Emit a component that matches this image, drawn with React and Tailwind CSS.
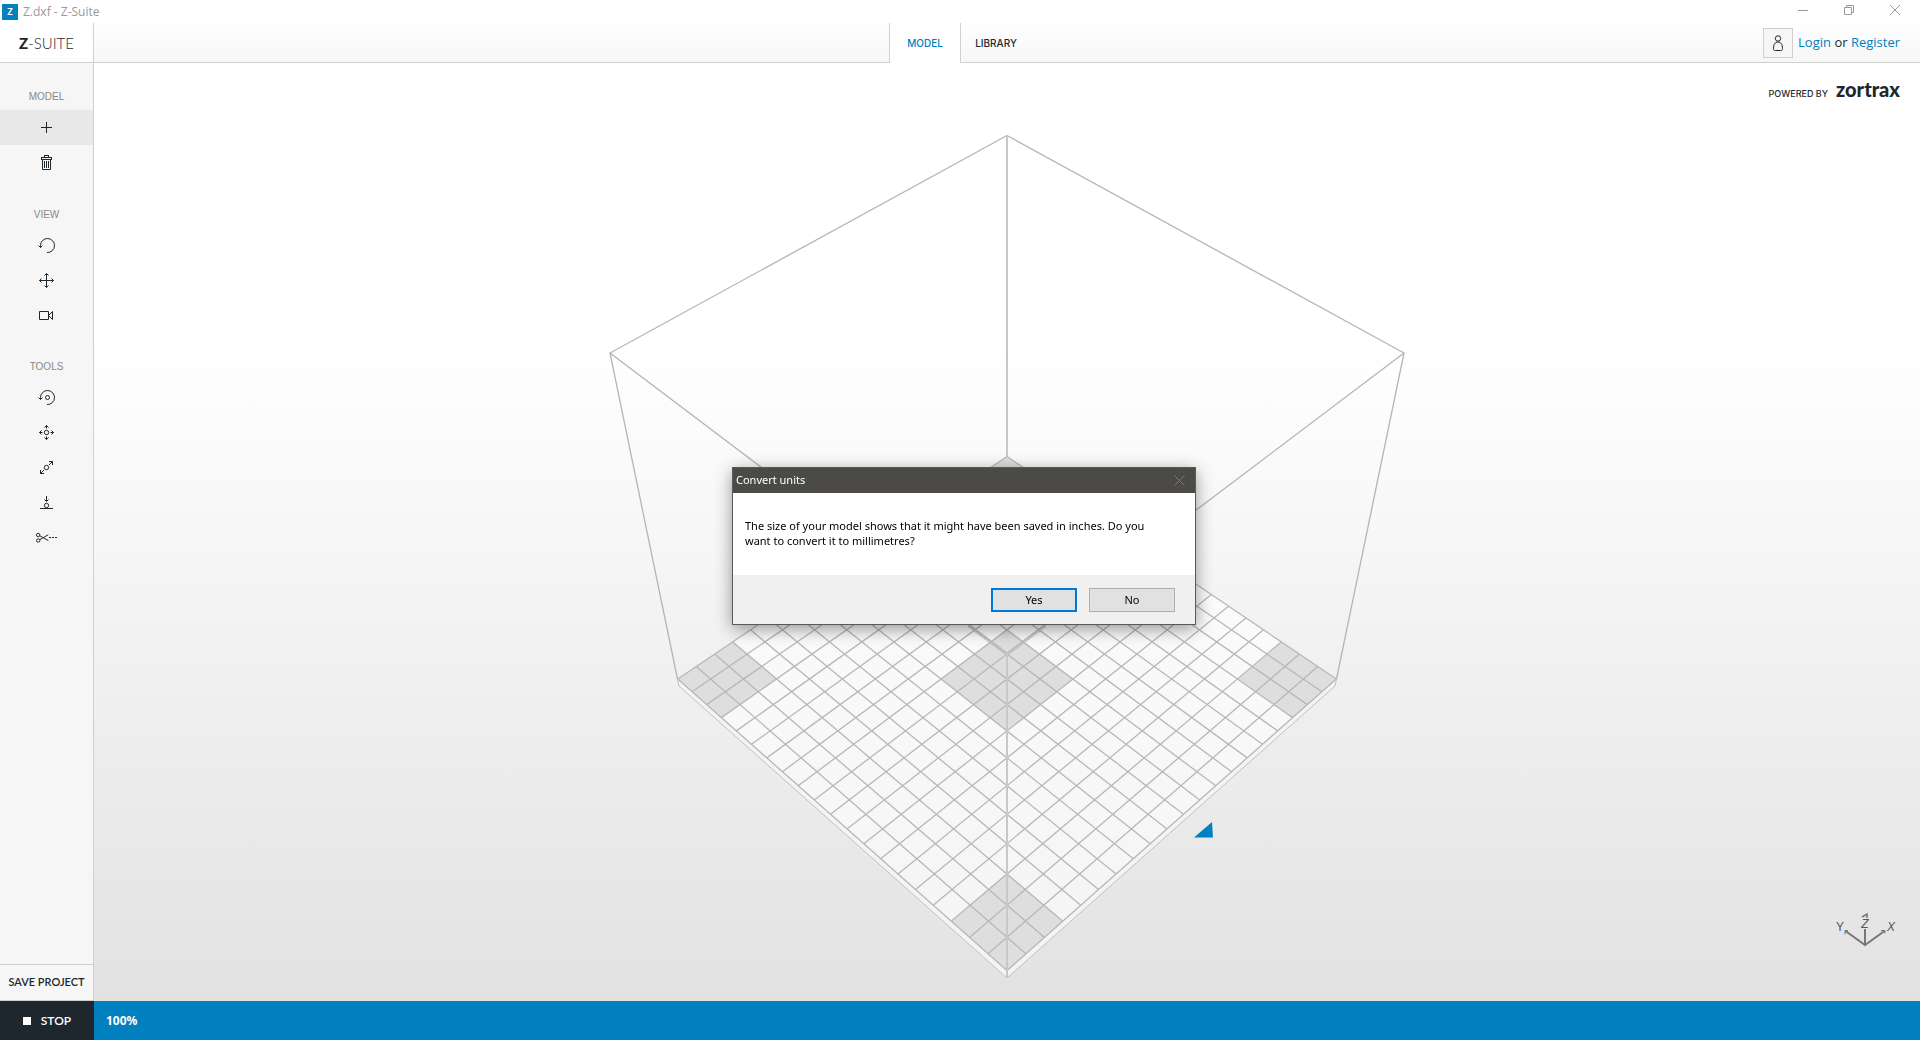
import React, { useState } from 'react';

const GRID_CELLS = 20;

const iconPaths = {
  add: <path d="M10.5 5v11M5 10.5h11" />,
  delete: (
    <>
      <rect x="8.5" y="3.5" width="4" height="2" />
      <rect x="5.5" y="5.5" width="10" height="2" />
      <path d="M6.5 7.5v10h8v-10M8.5 9v7M10.5 9v7M12.5 9v7" />
    </>
  ),
  rotateView: <path d="M4.5 12.5v-2a7 7 0 1 1 6.5 7M2.5 10.5l2 2 2-2" />,
  moveView: <path d="M10.5 3.5v14M3.5 10.5h14M8.5 5.5l2-2 2 2M8.5 15.5l2 2 2-2M5.5 8.5l-2 2 2 2M15.5 8.5l2 2-2 2" />,
  camera: <path d="M3.5 6.5h9v8h-9zM12.5 10.5l4-4v8z" />,
  rotate: (
    <>
      <path d="M4.5 12.5v-2a7 7 0 1 1 6.5 7M2.5 10.5l2 2 2-2" />
      <circle cx="11.5" cy="10.5" r="2" />
    </>
  ),
  move: (
    <>
      <circle cx="10.5" cy="10.5" r="2.2" />
      <path d="M10.5 3.5v3M10.5 14.5v3M3.5 10.5h3M14.5 10.5h3M8.5 5.5l2-2 2 2M8.5 15.5l2 2 2-2M5.5 8.5l-2 2 2 2M15.5 8.5l2 2-2 2" />
    </>
  ),
  scale: (
    <>
      <circle cx="10.5" cy="10.5" r="2.2" />
      <path d="M13 8l3.5-3.5M8 13l-3.5 3.5M13 4.5h3.5v3.5M4.5 13v3.5h3.5" />
    </>
  ),
  drop: (
    <>
      <circle cx="10.5" cy="13.5" r="2.2" />
      <path d="M10.5 4v5.5M8.5 7.5l2 2 2-2M4 16.5h13" />
    </>
  ),
  cut: (
    <>
      <circle cx="2.2" cy="8" r="1.7" />
      <circle cx="2.2" cy="13.5" r="1.7" />
      <path d="M3.8 8.8l8.5 4.7M3.8 12.7l8.5-5M13 10.5h2M16 10.5h2M19 10.5h2" />
    </>
  ),
};

const sections = [
  { title: 'MODEL', items: [{ id: 'add', label: 'Add model' }, { id: 'delete', label: 'Delete model' }] },
  {
    title: 'VIEW',
    items: [
      { id: 'rotateView', label: 'Rotate view' },
      { id: 'moveView', label: 'Move view' },
      { id: 'camera', label: 'Camera' },
    ],
  },
  {
    title: 'TOOLS',
    items: [
      { id: 'rotate', label: 'Rotate' },
      { id: 'move', label: 'Move' },
      { id: 'scale', label: 'Scale' },
      { id: 'drop', label: 'Place on platform' },
      { id: 'cut', label: 'Split' },
    ],
  },
];

// Perspective projection of a platform cell (u, v) to scene coordinates
const project = (u, v) => {
  const s = (u + v) / GRID_CELLS;
  const d = (u - v) / GRID_CELLS;
  const w = 1 - 0.1184 * s;
  return [1007 + (329.25 * d * 0.8816) / w, (456.5 + 142.1 * s) / w];
};

const quad = (u, v, size) =>
  [project(u, v), project(u + size, v), project(u + size, v + size), project(u, v + size)]
    .map((p) => p.map((n) => n.toFixed(1)).join(','))
    .join(' ');

const segment = (a, b) => `M${a.map((n) => n.toFixed(1)).join(' ')}L${b.map((n) => n.toFixed(1)).join(' ')}`;

const gridPath = Array.from({ length: GRID_CELLS + 1 }, (_, i) =>
  segment(project(i, 0), project(i, GRID_CELLS)) + segment(project(0, i), project(GRID_CELLS, i))
).join('');

const darkAreas = [[0, 0, 3], [17, 0, 3], [0, 17, 3], [17, 17, 3], [8, 8, 4]];

const Scene = () => (
  <svg viewBox="94 63 1826 938" className="absolute inset-0 w-full h-full" fill="none" aria-label="Build platform">
    <path d="M677.5 679L679 686L1007 978L1335 686L1336.5 679L1007 970z" fill="#f4f4f4" />
    <polygon points={quad(0, 0, 20)} fill="#fff" fillOpacity="0.6" />
    {darkAreas.map(([u, v, size]) => (
      <polygon key={`${u}-${v}`} points={quad(u, v, size)} fill="#dedede" />
    ))}
    <path d={gridPath} stroke="#b7b7b7" strokeWidth="1.3" />
    <path d="M677.5 679L679 686L1007 978L1335 686L1336.5 679" stroke="#c0c0c0" />
    <g stroke="#b5b5b5" strokeWidth="1.3">
      <path d="M1007 135.5L610 353L677.5 679M1007 135.5L1404 353L1336.5 679" />
      <path d="M610 353L968 623.5M1404 353L1046 623.5" />
    </g>
    <path d="M968 623.5L1007 652.5L1046 623.5M968 626.5L1007 655.5L1046 626.5" stroke="#bcbcbc" />
    <path d="M1007 135.5V457M1007 653V978" stroke="#c8c8c8" strokeWidth="2" />
    <path d="M1194 837.5L1212 822L1213 837.5z" fill="#0080be" />
    <g stroke="#777" strokeWidth="2">
      <path d="M1845.5 931L1865 945L1884.5 931M1865 945V929" />
      <path d="M1845 934.5v-4h3M1881 930.5h4v3" strokeWidth="1" />
      <path d="M1862 917l5-3v4" strokeWidth="1.5" />
    </g>
    <g fill="#555" fontFamily="Liberation Sans" fontSize="12" textAnchor="middle">
      <text x="1840" y="931">Y</text>
      <text x="1865" y="928" fontStyle="italic">Z</text>
      <text x="1891" y="931" fontStyle="italic">X</text>
    </g>
  </svg>
);

const TitleBar = () => (
  <div className="flex items-center justify-between h-[23px] pl-0.5 pr-5 bg-white">
    <div className="flex items-center gap-[5px]">
      <span className="flex items-center justify-center w-4 h-4 bg-[#0080be] text-white text-[9px] leading-none font-bold">Z</span>
      <span className="text-xs leading-4 text-[#999] font-['Open_Sans',sans-serif]">Z.dxf - Z-Suite</span>
    </div>
    <div className="flex items-center gap-9 pb-[3px]">
      <button aria-label="Minimize">
        <svg width="10" height="10" stroke="#999" fill="none" className="block"><path d="M0 5.5h10" /></svg>
      </button>
      <button aria-label="Restore">
        <svg width="10" height="10" stroke="#999" fill="none" className="block"><path d="M.5 2.5h7v7h-7zM2.5 2.5v-2h7v7h-2" /></svg>
      </button>
      <button aria-label="Close">
        <svg width="10" height="10" stroke="#999" fill="none" className="block"><path d="M0 0l10 10M10 0L0 10" /></svg>
      </button>
    </div>
  </div>
);

const Header = ({ tab, setTab }) => (
  <header className="grid grid-cols-[1fr_auto_1fr] h-10 bg-linear-to-b from-white to-[#f6f6f6]">
    <div className="flex border-b border-[#d0d0d0]">
      <div className="flex items-center justify-center w-[94px] bg-white border-r border-[#d0d0d0] text-[15px] leading-5 text-[#1e272e]">
        <span><b className="font-black">Z</b><span className="font-light">-SUITE</span></span>
      </div>
    </div>
    <nav className="flex text-[10px] font-medium font-['Inter',sans-serif]">
      {['MODEL', 'LIBRARY'].map((name) => (
        <button
          key={name}
          onClick={() => setTab(name)}
          className={tab === name
            ? 'w-[72px] border-x border-[#d0d0d0] bg-white text-[#0080be]'
            : 'w-[70px] pt-px border-b border-[#d0d0d0] text-[#1e272e]'}
        >
          {name}
        </button>
      ))}
    </nav>
    <div className="flex items-center justify-end gap-[5px] pr-5 border-b border-[#d0d0d0]">
      <span className="flex items-center justify-center w-[30px] h-[30px] border border-[#d0d0d0] bg-[#f6f6f6]">
        <svg width="12" height="16" fill="none" stroke="#1e272e" className="block">
          <circle cx="6" cy="3.5" r="2.7" />
          <path d="M3.5 15.5h5c1.5 0 2-.5 2-2 0-4-1.5-6.5-4.5-6.5s-4.5 2.5-4.5 6.5c0 1.5.5 2 2 2z" />
        </svg>
      </span>
      <span className="pt-px text-[13px] text-[#1e272e] font-['Open_Sans',sans-serif]">
        <a href="#login" className="text-[#0080be]">Login</a> or <a href="#register" className="text-[#0080be]">Register</a>
      </span>
    </div>
  </header>
);

const Sidebar = () => (
  <aside className="flex flex-col w-[94px] shrink-0 bg-[#f6f6f6] border-r border-[#d0d0d0]">
    <div className="flex-1">
      {sections.map((section) => (
        <section key={section.title} className="flex flex-col first:pb-px">
          <h2 className="flex items-end justify-center h-[47px] pb-1.5 text-[10px] leading-[14px] text-[#888] font-['Liberation_Sans',sans-serif]">
            {section.title}
          </h2>
          {section.items.map((item) => (
            <button
              key={item.id}
              aria-label={item.label}
              className={`flex items-center justify-center h-[35px] ${item.id === 'add' ? 'bg-[#e8e8e8]' : ''}`}
            >
              <svg width="21" height="21" viewBox="0 0 21 21" fill="none" stroke="#1e272e">{iconPaths[item.id]}</svg>
            </button>
          ))}
        </section>
      ))}
    </div>
    <button className="h-[37px] border-y border-[#d0d0d0] text-[11px] text-[#1e272e] font-semibold whitespace-nowrap">SAVE PROJECT</button>
  </aside>
);

const ConvertDialog = ({ onClose }) => (
  <div className="fixed inset-0 flex items-center justify-center pl-2 pt-[52px]">
    <div
      role="dialog"
      aria-labelledby="dialog-title"
      className="w-[464px] border border-[#5a5957] bg-white text-[11px] text-black font-['Noto_Sans',sans-serif] shadow-[0_4px_16px_rgba(0,0,0,0.4)]"
    >
      <div className="flex items-center justify-between h-[25px] pl-[3px] pr-2.5 pb-px bg-[#4b4a47] text-white">
        <h2 id="dialog-title" className="leading-4">Convert units</h2>
        <button aria-label="Close dialog" onClick={onClose}>
          <svg width="11" height="11" stroke="#7d7c7a" fill="none" className="block"><path d="M.5 .5l10 10M10.5 .5l-10 10" /></svg>
        </button>
      </div>
      <p className="h-[82px] px-3 pt-[25px] leading-[15px]">
        The size of your model shows that it might have been saved in inches. Do you
        <br />
        want to convert it to millimetres?
      </p>
      <div className="flex items-center justify-end gap-3 h-[49px] pr-5 bg-[#f0f0f0]">
        <button onClick={onClose} className="w-[86px] h-6 border-2 border-[#0078d7] bg-[#e1e1e1] leading-4">Yes</button>
        <button onClick={onClose} className="w-[86px] h-6 border border-[#adadad] bg-[#e1e1e1] leading-4">No</button>
      </div>
    </div>
  </div>
);

const App = () => {
  const [tab, setTab] = useState('MODEL');
  const [dialogOpen, setDialogOpen] = useState(true);

  return (
    <div className="flex flex-col h-screen font-['Lato',sans-serif]">
      <TitleBar />
      <Header tab={tab} setTab={setTab} />

      <div className="flex flex-1 min-h-0">
        <Sidebar />
        <main className="relative flex-1 bg-linear-to-b from-white from-30% to-[#e2e2e2]">
          <Scene />
          <div className="relative flex items-baseline justify-end gap-2 pt-3.5 pr-5 text-[#1e272e]">
            <span className="text-[9px] font-medium font-['Inter',sans-serif]">POWERED BY</span>
            <span className="text-xl leading-6 font-black">zortrax</span>
          </div>
        </main>
      </div>

      {/* Progress */}
      <footer className="flex h-[39px] shrink-0 bg-[#0080be] text-white">
        <button className="flex items-center justify-center gap-2.5 w-[94px] bg-[#1e272e] text-xs font-semibold">
          <span className="w-2 h-2 bg-white" />
          STOP
        </button>
        <span className="flex items-center pl-3 text-xs font-bold font-['Noto_Sans',sans-serif]">100%</span>
      </footer>

      {dialogOpen && <ConvertDialog onClose={() => setDialogOpen(false)} />}
    </div>
  );
};

export default App;
